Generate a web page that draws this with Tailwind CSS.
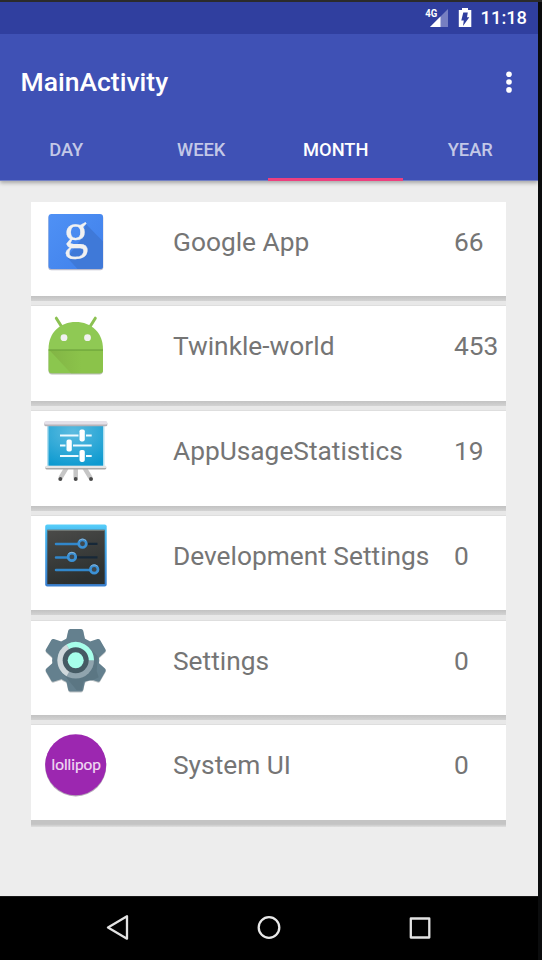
<!DOCTYPE html>
<html lang="en">
<head>
<meta charset="utf-8">
<title>MainActivity</title>
<script src="https://cdn.jsdelivr.net/npm/@tailwindcss/browser@4"></script>
</head>
<body class="bg-[#0b0c0d]">
<div class="w-[542px] h-[960px] overflow-hidden border-t-2 border-[#2b2b2b] pr-1 font-[Roboto,sans-serif] flex flex-col">
  <header class="relative z-10 shrink-0 h-[179px] bg-[#3f51b5] text-white font-medium border-b border-[#7380c4] shadow-[0_2px_4px_rgba(0,0,0,0.3)] flex flex-col">
    <div class="h-8 shrink-0 bg-[#303f9f] flex items-center justify-end pr-[11px] text-[18.3px]">
      <svg class="w-[50px] h-8 mr-[7px]" viewBox="424 2 50 32">
        <text x="425.300" y="16.800" font-family="Roboto,sans-serif" font-size="10.500" font-weight="700" fill="#fff" textLength="12" lengthAdjust="spacingAndGlyphs">4G</text>
        <path d="M448 9v18h-18z" fill="#8d96cc" fill-opacity=".75"/><path d="M440.500 16.500V27H430z" fill="#fff"/>
        <path d="M462 8h6v2h3.300v17h-12.500V10h3.200z" fill="#fff"/><path d="M467.800 12.500l-.8 4.800h2.300l-6.300 8.700.8-5.500h-2.500l2-8z" fill="#303f9f"/>
      </svg>
      <span>11:18</span>
    </div>
    <div class="h-[97px] shrink-0 flex items-center justify-between pl-[20.500px] pr-[26px]">
      <h1 class="text-[26.500px] leading-10 pb-[2px] font-medium">MainActivity</h1>
      <svg class="w-[6px] h-6" viewBox="0 0 6 24" fill="#fff"><circle cx="3" cy="3.200" r="2.800"/><circle cx="3" cy="11" r="2.800"/><circle cx="3" cy="18.900" r="2.800"/></svg>
    </div>
    <nav class="flex-1 -ml-px mr-px grid grid-cols-4 text-[18.300px] text-white/70 text-center leading-[38px]">
      <span>DAY</span><span class="pl-px">WEEK</span><span class="text-white border-b-3 border-[#ec407f] -mb-px pl-px">MONTH</span><span class="pl-px">YEAR</span>
    </nav>
  </header>

  <main class="flex-1 bg-[#ededed] pt-[20.500px] pl-[31px] pr-8 text-[26.300px] text-[#757575]">
    <section class="h-[104.800px] flex flex-col">
      <div class="h-[94.500px] bg-white flex pl-3">
        <svg class="w-[66px] h-[76px]" viewBox="43 201.500 66 76">
          <defs><linearGradient id="g1" x2="1" y2="1"><stop stop-color="#4f91f5"/><stop offset="1" stop-color="#4080ea"/></linearGradient><clipPath id="gc"><rect x="48.500" y="213.500" width="54.500" height="55" rx="3"/></clipPath></defs>
          <rect x="48.300" y="214.500" width="55" height="55.200" rx="3" fill="#bbc"/>
          <rect x="48.500" y="213.500" width="54.500" height="55" rx="3" fill="url(#g1)"/>
          <path clip-path="url(#gc)" d="M86 223.500L104 242v28H79L67 257l14-18z" fill="#3f79d8"/>
          <text x="63.700" y="247.800" font-family="Liberation Serif,serif" font-size="51" fill="#f1f1f1" stroke="#f1f1f1" stroke-width=".3" textLength="24.500" lengthAdjust="spacingAndGlyphs">g</text>
        </svg>
        <span class="w-[281px] pl-16 pt-[20px] leading-[40px] whitespace-nowrap">Google App</span><span class="pl-16 pt-[20px] leading-[40px]">66</span>
      </div>
      <div class="h-[5px] bg-linear-to-b from-[#c2c2c2] to-[#d3d3d3]"></div><div class="flex-1 bg-[#e8e8e8] border-b border-[#dedede]"></div>
    </section>
    <section class="h-[104.800px] flex flex-col">
      <div class="h-[94.500px] bg-white flex pl-3">
        <svg class="w-[66px] h-[76px]" viewBox="43 306.300 66 76">
          <defs><linearGradient id="a1" x2="1"><stop stop-color="#82b445"/><stop offset=".6" stop-color="#8bc34a"/></linearGradient></defs>
          <path d="M48.500 351v20q0 3.700 3.500 3.700h47.500q3.500 0 3.500-3.700v-20z" fill="#b9bdb4"/>
          <path d="M56.300 318.500l6 9.500M95.300 318.500l-6 9.500" stroke="#8cc152" stroke-width="3" stroke-linecap="round"/>
          <path d="M48.500 349.500C48.500 333 60 322.300 75.700 322.300S103 333 103 349.500z" fill="#8fc954"/>
          <path d="M48.500 349.500H103V370q0 3.500-3.500 3.500H52q-3.500 0-3.500-3.500z" fill="#8bc64e"/>
          <path d="M49 350l22 23.500H99.500q3.500 0 3.500-3.500V350z" fill="url(#a1)"/><path d="M48.500 350.300H103" stroke="#71a83d" stroke-width="1.300"/>
          <circle cx="64" cy="338" r="3.400" fill="#f1f1f1"/><circle cx="87.500" cy="338" r="3.400" fill="#f1f1f1"/>
        </svg>
        <span class="w-[281px] pl-16 pt-[20px] leading-[40px] whitespace-nowrap">Twinkle-world</span><span class="pl-16 pt-[20px] leading-[40px]">453</span>
      </div>
      <div class="h-[5px] bg-linear-to-b from-[#c2c2c2] to-[#d3d3d3]"></div><div class="flex-1 bg-[#e8e8e8] border-b border-[#dedede]"></div>
    </section>
    <section class="h-[104.800px] flex flex-col">
      <div class="h-[94.500px] bg-white flex pl-3">
        <svg class="w-[66px] h-[76px]" viewBox="43 411.100 66 76">
          <defs><radialGradient id="s1" cx=".45" cy=".15" r=".9"><stop stop-color="#5cbbe0"/><stop offset="1" stop-color="#0d9ad0"/></radialGradient></defs>
          <g stroke="#c6c6c6" stroke-width="4.500"><path d="M66.500 468l-6 10M75.700 468v10M84.500 468l6 10"/></g>
          <g fill="#4a4a4a"><circle cx="60.300" cy="479" r="2"/><circle cx="75.700" cy="479" r="2"/><circle cx="91" cy="479" r="2"/></g>
          <rect x="47" y="425" width="57.500" height="41" fill="#b2dff0"/><rect x="48.500" y="426" width="54.500" height="40" fill="url(#s1)"/>
          <rect x="44.300" y="422" width="63" height="4.300" rx="1.500" fill="#b6b3b9"/><rect x="44.300" y="421" width="63" height="3.500" rx="1.500" fill="#e4e0e8"/>
          <rect x="45.300" y="466.500" width="61" height="3" rx="1.300" fill="#aaa"/><rect x="45.300" y="465.800" width="61" height="2.300" rx="1" fill="#e4e4e4"/>
          <path d="M60 435.500h18.500M86 435.500h5.700M60 445.600h5.500M73 445.600h18.700M60 456h18.500M86 456h5.700" stroke="#eefaff" stroke-width="2"/>
          <g fill="#fff"><rect x="79.500" y="429.500" width="5.300" height="12" rx="1.800"/><rect x="66.500" y="439.700" width="5.300" height="12" rx="1.800"/><rect x="79.500" y="450" width="5.300" height="12" rx="1.800"/></g>
        </svg>
        <span class="w-[281px] pl-16 pt-[20px] leading-[40px] whitespace-nowrap">AppUsageStatistics</span><span class="pl-16 pt-[20px] leading-[40px]">19</span>
      </div>
      <div class="h-[5px] bg-linear-to-b from-[#c2c2c2] to-[#d3d3d3]"></div><div class="flex-1 bg-[#e8e8e8] border-b border-[#dedede]"></div>
    </section>
    <section class="h-[104.800px] flex flex-col">
      <div class="h-[94.500px] bg-white flex pl-3">
        <svg class="w-[66px] h-[76px]" viewBox="43 515.900 66 76">
          <defs><linearGradient id="d1" x2="0" y2="1"><stop stop-color="#58d0fa"/><stop offset=".15" stop-color="#42b3ee"/><stop offset="1" stop-color="#397fcf"/></linearGradient><linearGradient id="d2" x2=".3" y2="1"><stop stop-color="#4b4b49"/><stop offset="1" stop-color="#2c302f"/></linearGradient></defs>
          <rect x="45.200" y="524.300" width="61.500" height="62" rx="2" fill="url(#d1)"/><rect x="47.300" y="529.700" width="57.400" height="54.300" fill="url(#d2)"/>
          <path d="M47.300 530.200h57.400" stroke="#7b827f"/>
          <path d="M88 543.700h9.500M77 557.200h20.500" stroke="#172838" stroke-width="2.300"/><path d="M56 543.900h23M56 557.300h12M56 570h34" stroke="#3187cb" stroke-width="2.500" stroke-linecap="round"/>
          <g fill="#40484d" stroke="#3b91d6" stroke-width="2.700"><circle cx="82.500" cy="543.600" r="3.800"/><circle cx="71.900" cy="556.800" r="3.800"/><circle cx="94.200" cy="569.300" r="3.800"/></g>
          <path d="M79 540.500a5 5 0 0 1 7 0M68.400 553.700a5 5 0 0 1 7 0M90.700 566.200a5 5 0 0 1 7 0" fill="none" stroke="#8ab4d5"/>
        </svg>
        <span class="w-[281px] pl-16 pt-[20px] leading-[40px] whitespace-nowrap">Development Settings</span><span class="pl-16 pt-[20px] leading-[40px]">0</span>
      </div>
      <div class="h-[5px] bg-linear-to-b from-[#c2c2c2] to-[#d3d3d3]"></div><div class="flex-1 bg-[#e8e8e8] border-b border-[#dedede]"></div>
    </section>
    <section class="h-[104.800px] flex flex-col">
      <div class="h-[94.500px] bg-white flex pl-3">
        <svg class="w-[66px] h-[76px]" viewBox="-32.700 -39.300 66 76">
          <defs><g id="tooth"><path d="M-10-18L-7.500-29.500Q-7-31.300-5.500-31.300H5.500Q7-31.300 7.500-29.500L10-18z"/></g>
          <g id="gear"><circle r="23.500"/><use href="#tooth"/><use href="#tooth" transform="rotate(60)"/><use href="#tooth" transform="rotate(120)"/><use href="#tooth" transform="rotate(180)"/><use href="#tooth" transform="rotate(240)"/><use href="#tooth" transform="rotate(300)"/></g></defs>
          <use href="#gear" fill="#c0c5c7" y="1"/><use href="#gear" fill="#64808e"/>
          <path d="M13-13L22-4 21 11 23 17 17 20 8 21 6 30H1L-13 13z" fill="#5b7683"/>
          <circle r="18.300" fill="#90a4ae"/>
          <path d="M0 0L-9.150 15.850A18.300 18.300 0 0 1-9.150-15.850z" fill="#cfd8dc"/>
          <path d="M0 0L-9.150-15.850A18.300 18.300 0 0 1 18.300 0z" fill="#a7ffeb"/>
          <circle r="13" fill="#455a64"/><circle r="8" fill="#a7ffeb"/>
        </svg>
        <span class="w-[281px] pl-16 pt-[20px] leading-[40px] whitespace-nowrap">Settings</span><span class="pl-16 pt-[20px] leading-[40px]">0</span>
      </div>
      <div class="h-[5px] bg-linear-to-b from-[#c2c2c2] to-[#d3d3d3]"></div><div class="flex-1 bg-[#e8e8e8] border-b border-[#dedede]"></div>
    </section>
    <section class="flex flex-col">
      <div class="h-[94.500px] bg-white flex pl-3">
        <svg class="w-[66px] h-[76px]" viewBox="43 725.500 66 76">
          <circle cx="75.700" cy="766.300" r="30.600" fill="#b5a9b8"/><circle cx="75.700" cy="765.300" r="30.500" fill="#9c27b0"/>
          <text x="51.500" y="770" font-family="Lato,sans-serif" font-size="15.500" fill="#f0dcf3" stroke="#f0dcf3" stroke-width=".2" textLength="49.500" lengthAdjust="spacingAndGlyphs">lollipop</text>
        </svg>
        <span class="w-[281px] pl-16 pt-[20px] leading-[40px] whitespace-nowrap">System UI</span><span class="pl-16 pt-[20px] leading-[40px]">0</span>
      </div>
      <div class="h-[7px] bg-linear-to-b from-[#c4c4c4] from-60% to-[#e0e0e0]"></div>
    </section>
  </main>

  <footer class="h-16 shrink-0 bg-black border-t border-[#181818] flex justify-between pl-[105px] pr-[106px] pt-[18px]">
    <svg class="w-6 h-[26px]" viewBox="0 0 24 26" fill="none" stroke="#e2e2e2" stroke-width="2.300" stroke-linejoin="round"><path d="M22 1.300v22.400L3 12.500z"/></svg>
    <svg class="w-6 h-[26px]" viewBox="0 0 24 26" fill="none" stroke="#e8e8e8" stroke-width="2.300"><circle cx="12" cy="12.500" r="10.300"/></svg>
    <svg class="w-6 h-[26px]" viewBox="0 0 24 26" fill="none" stroke="#e2e2e2" stroke-width="2.300" stroke-linejoin="round"><rect x="2.800" y="3.500" width="18.500" height="19"/></svg>
  </footer>
</div>
</body>
</html>
